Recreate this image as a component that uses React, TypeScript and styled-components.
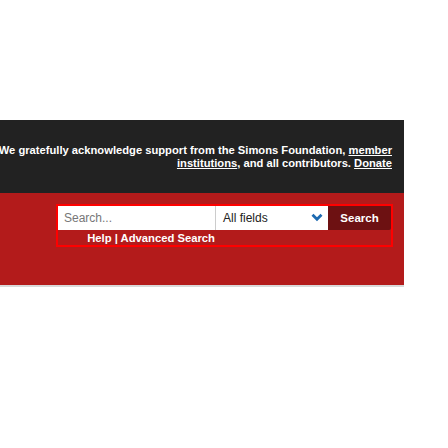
import React from "react";
import styled, { createGlobalStyle } from "styled-components";

const Global = createGlobalStyle`
  html, body { margin: 0; padding: 0; background: #fff; }
  body { font-family: "Liberation Sans", Arial, sans-serif; }
`;

const Page = styled.div`
  width: 404px;
  padding-top: 120px;
  overflow: hidden;
`;

const Support = styled.div`
  background: #222222;
  height: 73px;
  display: flex;
  flex-direction: column;
  justify-content: center;
  align-items: flex-end;
  padding-right: 12px;
  box-sizing: border-box;
  color: #fff;
  font-size: 11.2px;
  font-weight: bold;
  line-height: 13px;
  text-align: right;
  white-space: nowrap;
`;

const Line = styled.div``;

const Link = styled.a`
  color: #fff;
  text-decoration: underline;
`;

const RedBand = styled.div`
  background: #b31b1b;
  height: 94px;
  border-bottom: 2px solid #d9d9d9;
  padding-top: 11px;
  box-sizing: border-box;
`;

const Form = styled.form`
  margin: 0 0 0 56px;
  width: 337px;
  box-sizing: border-box;
  outline: 2px solid #ff0000;
  outline-offset: -2px;
  padding: 1px 2px 2px 2px;
  display: grid;
  grid-template-columns: 157px 113px 1fr;
  grid-template-rows: 25px auto;
`;

const Input = styled.input`
  border: none;
  margin: 0;
  padding: 0 6px;
  height: 25px;
  box-sizing: border-box;
  font-family: "Liberation Sans", Arial, sans-serif;
  font-size: 12px;
  color: #333;
  background: #fff;
  outline: none;
  &::placeholder { color: #777; }
`;

const Select = styled.div`
  background: #fff;
  border-left: 1px solid #ccc;
  height: 25px;
  box-sizing: border-box;
  display: flex;
  align-items: center;
  justify-content: space-between;
  padding: 0 5px 0 7px;
  font-size: 12px;
  color: #222;
`;

const Button = styled.button`
  background: #6d1112;
  color: #fff;
  border: none;
  margin: 0;
  height: 25px;
  font-family: "Liberation Sans", Arial, sans-serif;
  font-size: 11.5px;
  font-weight: bold;
  padding: 0;
  border-radius: 0 2px 2px 0;
`;

const HelpRow = styled.div`
  grid-column: 1 / 2;
  text-align: right;
  color: #fff;
  font-size: 11.25px;
  font-weight: bold;
  line-height: 14px;
  padding-top: 1px;
`;

const Chevron = () => (
  <svg width="12" height="9" viewBox="0 0 12 9">
    <path d="M1.5 1.8 L6 6.3 L10.5 1.8" fill="none" stroke="#1d6ab1" strokeWidth="2.8" />
  </svg>
);

export default function App() {
  return (
    <>
      <Global />
      <Page>
        <Support>
          <Line>
            We gratefully acknowledge support from the Simons Foundation, <Link>member</Link>
          </Line>
          <Line>
            <Link>institutions</Link>, and all contributors. <Link>Donate</Link>
          </Line>
        </Support>
        <RedBand>
          <Form>
            <Input placeholder="Search..." />
            <Select>
              <span>All fields</span>
              <Chevron />
            </Select>
            <Button type="button">Search</Button>
            <HelpRow>Help | Advanced Search</HelpRow>
          </Form>
        </RedBand>
      </Page>
    </>
  );
}
